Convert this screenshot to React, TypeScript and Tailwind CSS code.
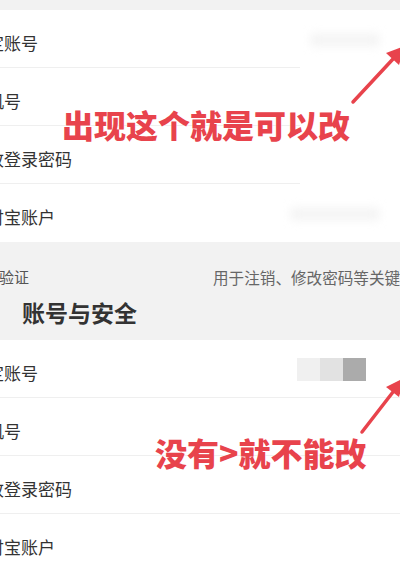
import React from 'react';

const rows = ['绑定账号', '手机号', '修改登录密码', '支付宝账户'];

function Row({ label, last, short, right }: { label: string; last?: boolean; short?: boolean; right?: React.ReactNode }) {
  return (
    <div className="relative h-[58px] flex items-center pt-[8px]">
      <span className="-ml-[30px] whitespace-nowrap text-[17px] leading-[20px] text-[#333]">{label}</span>
      {right}
      {!last && (
        <div className={`absolute bottom-0 left-0 h-px bg-[#efefef] ${short ? 'w-[300px]' : 'w-full'}`} />
      )}
    </div>
  );
}

const blurred = (w: string) => (
  <div className={`ml-auto mr-[20px] -mt-[6px] h-[14px] rounded bg-[#f5f5f5] blur-[4px] ${w}`} />
);

export default function App() {
  return (
    <div
      className="relative w-[400px] h-[566px] overflow-hidden bg-white"
      style={{ fontFamily: '"Noto Sans CJK SC", "Noto Sans", sans-serif' }}
    >
      <div className="h-[10px] bg-[#f2f2f2]" />

      <div className="bg-white">
        {rows.map((r, i) => (
          <Row
            key={r}
            label={r}
            short
            last={i === rows.length - 1}
            right={i === 0 ? blurred('w-[70px]') : i === 3 ? blurred('w-[90px]') : undefined}
          />
        ))}
      </div>

      <div className="bg-[#f2f2f2] pt-[26px] pb-[14px]">
        <div className="flex items-center">
          <div className="w-[213px] shrink-0 overflow-hidden">
            <span className="-ml-[31px] block whitespace-nowrap text-[15px] leading-[18px] text-[#555]">身份验证</span>
          </div>
          <span className="whitespace-nowrap text-[15.6px] leading-[18px] text-[#666]">用于注销、修改密码等关键操作</span>
        </div>
        <div className="mt-[12px] pl-[22px] text-[23px] leading-[28px] font-semibold text-[#333]">账号与安全</div>
      </div>

      <div className="bg-white">
        {rows.map((r, i) => (
          <Row
            key={r}
            label={r}
            last={i === rows.length - 1}
            right={
              i === 0 ? (
                <div className="ml-auto mr-[34px] -mt-[8px] flex">
                  <div className="h-[23px] w-[23px] bg-[#f0f0f0]" />
                  <div className="h-[23px] w-[23px] bg-[#e2e2e2]" />
                  <div className="h-[23px] w-[23px] bg-[#ababab]" />
                </div>
              ) : undefined
            }
          />
        ))}
      </div>

      <div className="absolute left-[62px] top-[104px] whitespace-nowrap text-[32px] leading-[40px] font-black text-[#e8434c] [text-shadow:0_0_2px_#fff]">
        出现这个就是可以改
      </div>
      <div className="absolute left-[155px] top-[432px] whitespace-nowrap text-[32px] leading-[40px] font-black text-[#e8434c] [text-shadow:0_0_2px_#fff]">
        没有&gt;就不能改
      </div>

      <svg className="pointer-events-none absolute inset-0" width="400" height="566" viewBox="0 0 400 566">
        <line x1="353" y1="102" x2="393" y2="59" stroke="#e8434c" strokeWidth="3.5" strokeLinecap="round" />
        <polygon points="405,46 399,65 386,53" fill="#e8434c" />
        <line x1="362" y1="432" x2="393" y2="392" stroke="#e8434c" strokeWidth="3.5" strokeLinecap="round" />
        <polygon points="404,378 399,397 386,387" fill="#e8434c" />
      </svg>
    </div>
  );
}
